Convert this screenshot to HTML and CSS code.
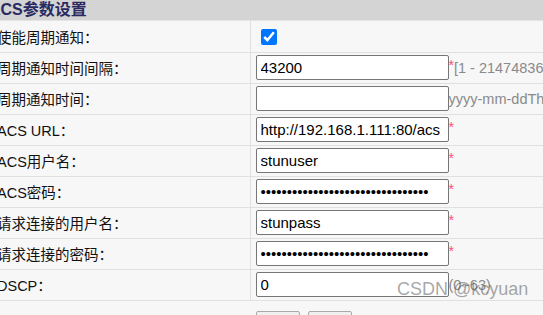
FILE: index.html
```html
<!DOCTYPE html>
<html>
	<head>
		<meta charset="utf-8">
		<title>ACS参数设置</title>
		<link rel="stylesheet" href="styles.css">
	</head>
	<body>
		<div class="page">
			<div class="panel-title">ACS参数设置</div>
			<table class="form">
				<colgroup>
					<col class="col-label">
					<col class="col-value">
				</colgroup>
				<tr>
					<td class="label">使能周期通知：</td>
					<td class="value"><input type="checkbox" class="check" checked></td>
				</tr>
				<tr>
					<td class="label">周期通知时间间隔：</td>
					<td class="value"><input type="text" class="field" value="43200"><span class="req">*</span><span class="hint">[1 - 2147483647]</span></td>
				</tr>
				<tr>
					<td class="label">周期通知时间：</td>
					<td class="value"><input type="text" class="field" value=""><span class="hint">yyyy-mm-ddThh:mm:ss</span></td>
				</tr>
				<tr>
					<td class="label">ACS URL：</td>
					<td class="value"><input type="text" class="field" value="http://192.168.1.111:80/acs"><span class="req">*</span></td>
				</tr>
				<tr>
					<td class="label">ACS用户名：</td>
					<td class="value"><input type="text" class="field" value="stunuser"><span class="req">*</span></td>
				</tr>
				<tr>
					<td class="label">ACS密码：</td>
					<td class="value"><input type="password" class="field" value="stunpassstunpassstunpassstunpass"><span class="req">*</span></td>
				</tr>
				<tr>
					<td class="label">请求连接的用户名：</td>
					<td class="value"><input type="text" class="field" value="stunpass"><span class="req">*</span></td>
				</tr>
				<tr>
					<td class="label">请求连接的密码：</td>
					<td class="value"><input type="password" class="field" value="stunpassstunpassstunpassstunpass"><span class="req">*</span></td>
				</tr>
				<tr>
					<td class="label">DSCP：</td>
					<td class="value"><input type="text" class="field" value="0"><span class="hint">(0~63)</span></td>
				</tr>
			</table>
			<div class="buttons">
				<button class="btn">保存</button>
				<button class="btn">取消</button>
			</div>
		</div>
		<div class="watermark">CSDN @kcyuan</div>
	</body>
</html>
```

FILE: styles.css
```css
*{margin: 0;padding: 0;box-sizing: border-box;}
html,
body{width: 100%;height: 100%;overflow: hidden;background-color: #f7f7f7;}
body{font-family: "Liberation Sans", "Noto Sans CJK SC", sans-serif;font-size: 14.5px;color: #111;}
.page{margin-left: -14px;width: 600px;}
.panel-title{height: 21px;line-height: 19px;padding-left: 3px;background-color: #d4d4d4;
	border-bottom: 1px solid #e4e4e4;font-size: 16px;font-weight: bold;color: #2a2a62;white-space: nowrap;}
.form{border-collapse: collapse;width: 100%;table-layout: fixed;}
.col-label{width: 264px;}
.form td{height: 31px;border-bottom: 1px solid #e0e0e0;background-color: #f7f7f7;white-space: nowrap;overflow: hidden;}
.form .label{padding-left: 11px;border-right: 1px solid #e0e0e0;}
.form .value{padding-left: 5px;}
.check{width: 16px;height: 16px;margin: 4px 0 0 5px;accent-color: #0075ff;}
.field{width: 193px;height: 25px;vertical-align: middle;border: 1px solid #767676;border-radius: 2px;
	padding: 0 4px;font-family: "Liberation Sans", sans-serif;font-size: 15px;color: #000;background-color: #fff;}
.req{color: #ff4d7a;vertical-align: middle;font-size: 14px;position: relative;top: -3px;}
.hint{color: #8a8a8a;vertical-align: middle;font-size: 14.5px;}
.buttons{padding: 10px 0 0 270px;}
.btn{width: 44px;height: 26px;margin-right: 4px;border: 1px solid #aaa;border-radius: 2px;background-color: #efefef;
	font-family: "Noto Sans CJK SC", sans-serif;font-size: 13px;}
.watermark{position: absolute;left: 397px;top: 279px;font-family: "Liberation Sans", sans-serif;font-size: 18px;
	color: rgba(80, 80, 80, 0.5);white-space: nowrap;}
```
